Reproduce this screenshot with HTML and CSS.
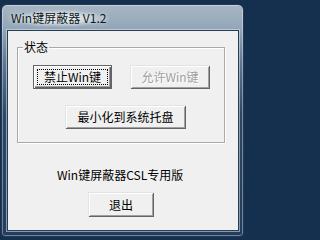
FILE: index.html
```html
<!DOCTYPE html>
<html lang="zh">
<head>
<meta charset="utf-8">
<title>Win键屏蔽器 V1.2</title>
<link rel="stylesheet" href="styles.css">
</head>
<body>
<div class="window">
  <div class="titlebar"><span class="title">Win键屏蔽器 V1.2</span></div>
  <div class="client">
    <div class="group">
      <span class="group-label">状态</span>
      <div class="row">
        <button class="btn btn-default btn-w1">禁止Win键</button>
        <button class="btn btn-disabled btn-w2" disabled>允许Win键</button>
      </div>
      <button class="btn btn-tray">最小化到系统托盘</button>
    </div>
    <div class="note">Win键屏蔽器CSL专用版</div>
    <button class="btn btn-exit">退出</button>
  </div>
</div>
</body>
</html>
```
FILE: styles.css
```css
html, body {
  margin: 0;
  padding: 0;
}
html {
  background: #15304e;
}
body {
  width: 247px;
  height: 239px;
  background: #15304e;
  overflow: hidden;
  font-family: "Noto Sans CJK SC", "Noto Sans", sans-serif;
}
.window {
  box-sizing: border-box;
  margin: 4px 0 0 1px;
  width: 243px;
  height: 233px;
  border: 1px solid #233a52;
  border-radius: 6px 6px 4px 4px;
  background: linear-gradient(to bottom, #a7b6c3 0px, #93a6b7 24px, #5d7590 60px, #2d4867 110px, #223d5d 100%);
  box-shadow: inset 0 0 0 1px rgba(255,255,255,0.35);
  padding: 0 4px 5px 5px;
  display: flex;
  flex-direction: column;
}
.titlebar {
  height: 25px;
  display: flex;
  align-items: center;
  padding-left: 3px;
}
.title {
  font-size: 12px;
  color: #101820;
  line-height: 16px;
  padding: 0 4px 1px 1px;
  background: radial-gradient(ellipse at center, rgba(230,236,240,0.75) 30%, rgba(230,236,240,0) 72%);
  text-shadow: 0 0 5px rgba(255,255,255,0.9);
  margin-top: 2px;
}
.client {
  flex: 1;
  background: #f0f0f0;
  border: 1px solid #2a3c50;
  box-shadow: 0 0 0 1px rgba(220,232,242,0.55);
  display: flex;
  flex-direction: column;
  align-items: flex-start;
}
.group {
  position: relative;
  box-sizing: border-box;
  margin: 16px 0 0 9px;
  width: 208px;
  height: 96px;
  border: 1px solid #a9a9a9;
  box-shadow: inset 1px 1px 0 #fff, 1px 1px 0 #fff;
  padding-top: 17px;
  display: flex;
  flex-direction: column;
  align-items: center;
}
.group-label {
  position: absolute;
  left: 5px;
  top: -9px;
  background: #f0f0f0;
  padding: 0 1px;
  font-size: 12px;
  line-height: 16px;
  color: #000;
}
.row {
  display: flex;
  gap: 18px;
  margin-left: 1px;
}
.btn {
  position: relative;
  box-sizing: border-box;
  height: 24px;
  padding: 0;
  margin: 0;
  border: none;
  background: #f0f0f0;
  font-family: "Noto Sans CJK SC", "Noto Sans", sans-serif;
  font-size: 12px;
  line-height: 14px;
  color: #000;
  box-shadow: inset 1px 1px 0 #e3e3e3, inset -1px -1px 0 #646464, inset 2px 2px 0 #fff, inset -2px -2px 0 #a0a0a0;
}
.btn-w1 { width: 79px; }
.btn-w2 { width: 80px; }
.btn-default {
  box-shadow: inset 0 0 0 1px #646464, inset 2px 2px 0 #fff, inset -2px -2px 0 #646464, inset -3px -3px 0 #a0a0a0;
}
.btn-default::after {
  content: "";
  position: absolute;
  left: 4px;
  top: 4px;
  right: 4px;
  bottom: 4px;
  border: 1px dotted #000;
}
.btn-disabled {
  color: #a0a0a0;
  text-shadow: 1px 1px 0 #fff;
}
.btn-tray {
  width: 121px;
  margin-top: 16px;
  margin-left: 9px;
}
.note {
  margin: 25px 0 0 49px;
  font-size: 12px;
  line-height: 14px;
  color: #000;
}
.btn-exit {
  width: 66px;
  height: 25px;
  margin: 10px 0 0 80px;
}
```
